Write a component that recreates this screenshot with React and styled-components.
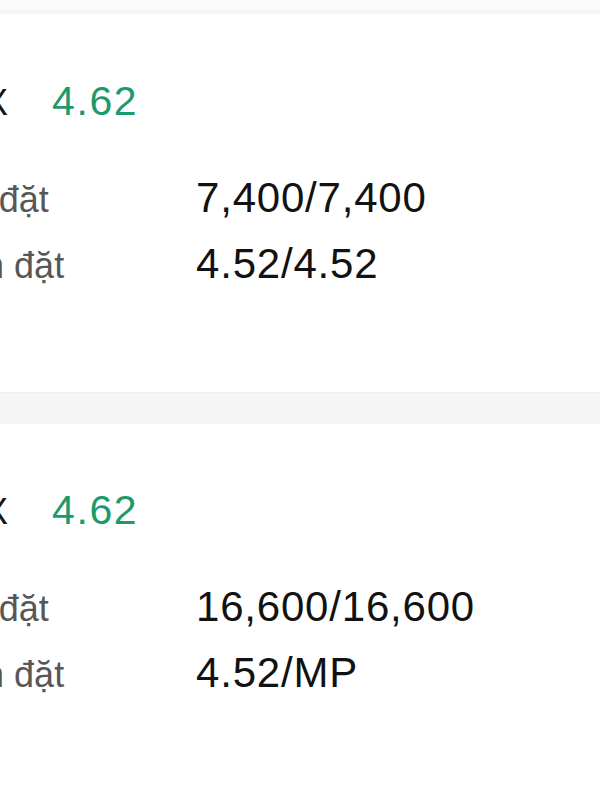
import React from "react";
import styled, { createGlobalStyle } from "styled-components";

const GlobalStyle = createGlobalStyle`
  html, body {
    margin: 0;
    padding: 0;
    background: #ffffff;
    font-family: "Liberation Sans", Arial, Helvetica, sans-serif;
  }
  body { overflow: hidden; }
`;

const Viewport = styled.div`
  width: 600px;
  height: 800px;
  overflow: hidden;
  background: #f4f4f4;
  display: flex;
  flex-direction: column;
`;

const TopEdge = styled.div`
  height: 15px;
  flex: none;
  background: linear-gradient(#fbfbfb 0%, #fafafa 55%, #f3f3f3 80%, #fbfbfb 100%);
`;

const Card = styled.section`
  flex: ${(p) => (p.$fill ? "1 0 auto" : "none")};
  background: #ffffff;
  padding: 62px 0 101px;
`;

const Separator = styled.div`
  flex: none;
  height: 32px;
  background: #f5f5f5;
  border-top: 1px solid #efefef;
  box-sizing: border-box;
`;

const Content = styled.div`
  margin-left: -146px;
  display: flex;
  flex-direction: column;
  gap: 46px;
`;

const Header = styled.div`
  display: flex;
  align-items: baseline;
  gap: 45px;
`;

const Ticker = styled.span`
  font-size: 36px;
  line-height: 48px;
  letter-spacing: -1px;
  color: #141414;
  white-space: nowrap;
`;

const Price = styled.span`
  font-size: 41px;
  line-height: 48px;
  letter-spacing: 1.6px;
  color: #1d9a6c;
`;

const Rows = styled.div`
  display: flex;
  flex-direction: column;
  gap: 14px;
`;

const Row = styled.div`
  display: grid;
  grid-template-columns: 342px 1fr;
  align-items: baseline;
`;

const Label = styled.span`
  font-size: 36px;
  line-height: 50px;
  color: #575757;
  white-space: nowrap;
`;

const Value = styled.span`
  font-size: 42px;
  line-height: 50px;
  letter-spacing: 0.8px;
  color: #121212;
  white-space: nowrap;
`;

const orders = [
  { ticker: "VNINDEX", price: "4.62", qty: "7,400/7,400", px: "4.52/4.52" },
  { ticker: "VNINDEX", price: "4.62", qty: "16,600/16,600", px: "4.52/MP" },
];

function OrderCard({ order, fill }) {
  return (
    <Card $fill={fill}>
      <Content>
        <Header>
          <Ticker>{order.ticker}</Ticker>
          <Price>{order.price}</Price>
        </Header>
        <Rows>
          <Row>
            <Label>Tổng KL đặt</Label>
            <Value>{order.qty}</Value>
          </Row>
          <Row>
            <Label>Tổng tiền đặt</Label>
            <Value>{order.px}</Value>
          </Row>
        </Rows>
      </Content>
    </Card>
  );
}

export default function App() {
  return (
    <>
      <GlobalStyle />
      <Viewport>
        <TopEdge />
        <OrderCard order={orders[0]} />
        <Separator />
        <OrderCard order={orders[1]} fill />
      </Viewport>
    </>
  );
}
